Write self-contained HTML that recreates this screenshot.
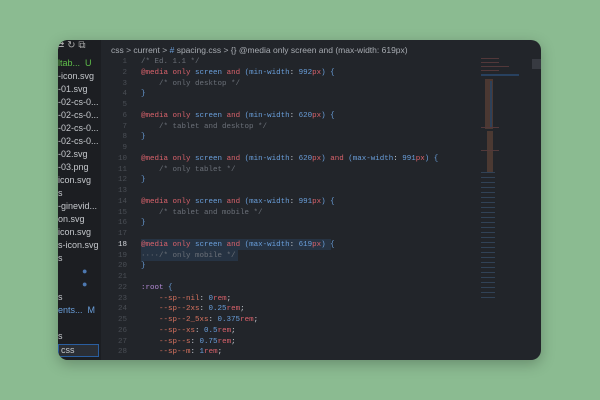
<!DOCTYPE html>
<html><head><style>
*{margin:0;padding:0;box-sizing:border-box}
body{width:600px;height:400px;background:#8bbb91;position:relative;overflow:hidden;font-family:"Liberation Sans",sans-serif}
.win{position:absolute;left:58px;top:40px;width:483px;height:320px;border-radius:10px;background:#22252a;overflow:hidden;box-shadow:0 4px 14px rgba(0,0,0,.25)}
.side{position:absolute;left:0;top:0;width:43px;height:320px;background:#1c1e22;overflow:hidden}
.side div{position:absolute;left:0;font-size:9px;color:#c5c8cc;white-space:nowrap;line-height:11px}
.bc{position:absolute;left:53px;top:5px;font-size:8.5px;color:#a7abb1;white-space:nowrap}
.code{position:absolute;left:0;top:17px;font-family:"Liberation Mono",monospace;font-size:7.5px;line-height:10.75px;white-space:pre}
.ln{position:absolute;left:43px;width:26px;text-align:right;color:#4a4e55}
.tx{position:absolute;left:83px;color:#c8ccd2}
.r{color:#d9626b}.b{color:#6a9fdb}.c{color:#6b7078}.p{color:#d9735f}.v{color:#b48ad6}
.hl{position:absolute;background:#263343}
.mini{position:absolute;left:423px;top:15px;width:60px;height:305px;opacity:.55}
</style></head><body>
<div class="win">
<div class="side">
<div style="top:0;left:-2px;color:#aaa;font-size:10px">⇄ ↻ ⧉</div>
<div style="top:18px;color:#5fbf4a">ltab... &nbsp;U</div>
<div style="top:31px">-icon.svg</div>
<div style="top:44px">-01.svg</div>
<div style="top:57px">-02-cs-0...</div>
<div style="top:70px">-02-cs-0...</div>
<div style="top:83px">-02-cs-0...</div>
<div style="top:96px">-02-cs-0...</div>
<div style="top:109px">-02.svg</div>
<div style="top:122px">-03.png</div>
<div style="top:135px">icon.svg</div>
<div style="top:148px">s</div>
<div style="top:161px">-ginevid...</div>
<div style="top:174px">on.svg</div>
<div style="top:187px">icon.svg</div>
<div style="top:200px">s-icon.svg</div>
<div style="top:213px">s</div>
<div style="top:226px;left:24px;color:#4d78b0">●</div>
<div style="top:239px;left:24px;color:#4d78b0">●</div>
<div style="top:252px">s</div>
<div style="top:265px;color:#6a9fdb">ents... &nbsp;M</div>
<div style="top:291px">s</div>
<div style="top:304px;width:41px;height:13px;border:1px solid #2a5ea0;background:#2a2e35;padding-left:2px">css</div>
</div>
<div class="bc">css &gt; current &gt; <span style="color:#6a9fdb">#</span> spacing.css &gt; {} @media only screen and (max-width: 619px)</div>
<div class="hl" style="left:83px;top:199px;width:190px;height:11px"></div>
<div class="hl" style="left:83px;top:210px;width:97px;height:11px"></div>
<div class="code">
<div class="ln" style="top:0">1
2
3
4
5
6
7
8
9
10
11
12
13
14
15
16
17
<span style="color:#d0d3d8">18</span>
19
20
21
22
23
24
25
26
27
28</div>
<div class="tx" style="top:0"><span class="c">/* Ed. 1.1 */</span>
<span class="r">@media only</span> <span class="b">screen</span> <span class="r">and</span> <span class="b">(min-width</span>: <span class="b">992</span><span class="r">px</span><span class="b">) {</span>
    <span class="c">/* only desktop */</span>
<span class="b">}</span>

<span class="r">@media only</span> <span class="b">screen</span> <span class="r">and</span> <span class="b">(min-width</span>: <span class="b">620</span><span class="r">px</span><span class="b">) {</span>
    <span class="c">/* tablet and desktop */</span>
<span class="b">}</span>

<span class="r">@media only</span> <span class="b">screen</span> <span class="r">and</span> <span class="b">(min-width</span>: <span class="b">620</span><span class="r">px</span><span class="b">)</span> <span class="r">and</span> <span class="b">(max-width</span>: <span class="b">991</span><span class="r">px</span><span class="b">) {</span>
    <span class="c">/* only tablet */</span>
<span class="b">}</span>

<span class="r">@media only</span> <span class="b">screen</span> <span class="r">and</span> <span class="b">(max-width</span>: <span class="b">991</span><span class="r">px</span><span class="b">) {</span>
    <span class="c">/* tablet and mobile */</span>
<span class="b">}</span>

<span class="r">@media only</span> <span class="b">screen</span> <span class="r">and</span> <span class="b">(max-width</span>: <span class="b">619</span><span class="r">px</span><span class="b">) {</span>
<span class="c">····/* only mobile */</span>
<span class="b">}</span>

<span class="v">:root</span> <span class="b">{</span>
    <span class="p">--sp--nil</span>: <span class="b">0</span><span class="r">rem</span>;
    <span class="p">--sp--2xs</span>: <span class="b">0.25</span><span class="r">rem</span>;
    <span class="p">--sp--2_5xs</span>: <span class="b">0.375</span><span class="r">rem</span>;
    <span class="p">--sp--xs</span>: <span class="b">0.5</span><span class="r">rem</span>;
    <span class="p">--sp--s</span>: <span class="b">0.75</span><span class="r">rem</span>;
    <span class="p">--sp--m</span>: <span class="b">1</span><span class="r">rem</span>;</div>
</div>
<svg class="mini" width="60" height="305">
<g fill="#7a4a48">
<rect x="0" y="3" width="18" height="1"/><rect x="0" y="7" width="18" height="1"/><rect x="0" y="11" width="28" height="1"/><rect x="0" y="15" width="18" height="1"/>
</g>
<rect x="0" y="19" width="38" height="2" fill="#2f5a8a"/>
<rect x="4" y="24" width="8" height="50" fill="#6e4a3a"/><rect x="9" y="26" width="2" height="46" fill="#3a5a80"/>
<rect x="0" y="72" width="18" height="1" fill="#7a4a48"/>
<rect x="6" y="76" width="6" height="24" fill="#6e4a3a"/>
<rect x="0" y="95" width="18" height="1" fill="#7a4a48"/>
<rect x="6" y="98" width="6" height="20" fill="#6e4a3a"/>
<g fill="#3e5a7a">
<rect x="0" y="117" width="14" height="1"/><rect x="0" y="122" width="14" height="1"/><rect x="0" y="127" width="14" height="1"/><rect x="0" y="132" width="14" height="1"/><rect x="0" y="137" width="14" height="1"/><rect x="0" y="142" width="14" height="1"/><rect x="0" y="147" width="14" height="1"/><rect x="0" y="152" width="14" height="1"/><rect x="0" y="157" width="14" height="1"/><rect x="0" y="162" width="14" height="1"/><rect x="0" y="167" width="14" height="1"/><rect x="0" y="172" width="14" height="1"/><rect x="0" y="177" width="14" height="1"/><rect x="0" y="182" width="14" height="1"/><rect x="0" y="187" width="14" height="1"/><rect x="0" y="192" width="14" height="1"/><rect x="0" y="197" width="14" height="1"/><rect x="0" y="202" width="14" height="1"/><rect x="0" y="207" width="14" height="1"/><rect x="0" y="212" width="14" height="1"/><rect x="0" y="217" width="14" height="1"/><rect x="0" y="222" width="14" height="1"/><rect x="0" y="227" width="14" height="1"/><rect x="0" y="232" width="14" height="1"/><rect x="0" y="237" width="14" height="1"/><rect x="0" y="242" width="14" height="1"/>
</g>
<rect x="51" y="4" width="9" height="10" fill="#4a4e55"/>
</svg>
</div>
</body></html>
